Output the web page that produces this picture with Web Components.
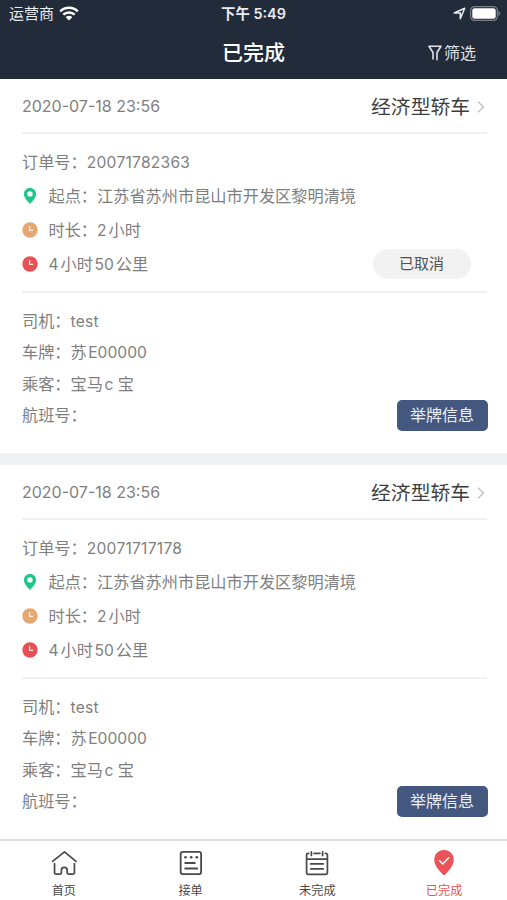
<!DOCTYPE html>
<html lang="zh-CN">
<head>
<meta charset="UTF-8">
<meta name="viewport" content="width=device-width, initial-scale=1.0">
<title>已完成</title>
<style>
    body {
        margin: 0;
        height: 900px;
        overflow: hidden;
        background: #fff;
        font-family: Inter, "Noto Sans CJK SC", sans-serif;
        font-size: 16.2px;
        color: #7f7f7f;
        display: flex;
        flex-direction: column;
    }
    order-list {
        flex: 1;
        min-height: 0;
    }
</style>
</head>
<body>
    <status-bar carrier="运营商" time="下午 5:49"></status-bar>
    <nav-header>已完成<span slot="action">筛选</span></nav-header>
    <order-list>
        <order-card date="2020-07-18 23:56" car="经济型轿车">
            <info-row slot="trip">订单号：<num-text wide>20071782363</num-text></info-row>
            <info-row slot="trip" icon="pin">起点：江苏省苏州市昆山市开发区黎明清境</info-row>
            <info-row slot="trip" icon="clock" color="#e5a873">时长：<num-text gap="end">2</num-text>小时</info-row>
            <info-row slot="trip" icon="clock" color="#e85057"><num-text gap="end">4</num-text>小时<num-text gap="both">50</num-text>公里<pill-tag slot="end">已取消</pill-tag></info-row>
            <info-row slot="people">司机：<num-text wide>test</num-text></info-row>
            <info-row slot="people">车牌：苏<num-text gap="start">E00000</num-text></info-row>
            <info-row slot="people">乘客：宝马<num-text gap="start">c </num-text>宝</info-row>
            <info-row slot="people">航班号：<action-button slot="end">举牌信息</action-button></info-row>
        </order-card>
        <order-card date="2020-07-18 23:56" car="经济型轿车">
            <info-row slot="trip">订单号：<num-text wide>20071717178</num-text></info-row>
            <info-row slot="trip" icon="pin">起点：江苏省苏州市昆山市开发区黎明清境</info-row>
            <info-row slot="trip" icon="clock" color="#e5a873">时长：<num-text gap="end">2</num-text>小时</info-row>
            <info-row slot="trip" icon="clock" color="#e85057"><num-text gap="end">4</num-text>小时<num-text gap="both">50</num-text>公里</info-row>
            <info-row slot="people">司机：<num-text wide>test</num-text></info-row>
            <info-row slot="people">车牌：苏<num-text gap="start">E00000</num-text></info-row>
            <info-row slot="people">乘客：宝马<num-text gap="start">c </num-text>宝</info-row>
            <info-row slot="people">航班号：<action-button slot="end">举牌信息</action-button></info-row>
        </order-card>
    </order-list>
    <tab-bar>
        <tab-item icon="home">首页</tab-item>
        <tab-item icon="list">接单</tab-item>
        <tab-item icon="calendar">未完成</tab-item>
        <tab-item icon="done" active>已完成</tab-item>
    </tab-bar>

<script>
const TAB_ICONS = {
    home: `<g fill="none" stroke="currentColor" stroke-width="1.8" stroke-linecap="round" stroke-linejoin="round">
        <path d="M2.200 11.800 14.500 2l12 9.800"/>
        <path d="M4.200 14.200V23.500a1.500 1.500 0 0 0 1.500 1.500H9.800a1.500 1.500 0 0 0 1.500-1.500V21a3 3 0 0 1 6 0v2.500a1.500 1.500 0 0 0 1.500 1.500H23.300a1.500 1.500 0 0 0 1.500-1.500V14.200"/>
    </g>`,
    list: `<g fill="none" stroke="currentColor" stroke-width="1.9" stroke-linecap="round">
        <rect x="3.300" y="2" width="21.200" height="23" rx="2.300"/>
        <path d="M8 13.500h10M8 19.200h12.500"/>
    </g>
    <g fill="currentColor"><circle cx="8.300" cy="7.500" r="1.400"/><circle cx="14.200" cy="7.500" r="1.400"/><circle cx="20" cy="7.500" r="1.400"/></g>`,
    calendar: `<g fill="none" stroke="currentColor" stroke-width="1.8" stroke-linecap="round">
        <path d="M5.300 3.500H5a1.800 1.800 0 0 0-1.800 1.800V23A2.200 2.200 0 0 0 5.400 25.200H22.600A2.200 2.200 0 0 0 24.800 23V5.300A1.800 1.800 0 0 0 23 3.500H22.700M11 3.500h6M3.200 9.500H24.800"/>
        <path d="M8.200 2v3.600M19.800 2v3.600M7.500 14.500h13M7.500 19.500h13"/>
    </g>`,
    done: `<path fill="currentColor" d="M14 0C8.200 0 3.900 4.400 3.900 10 3.900 16 9 21.500 12.800 25.300a1.700 1.700 0 0 0 2.400 0C19 21.500 24.100 16 24.100 10 24.100 4.400 19.800 0 14 0z"/>
    <path d="M9.400 11.200l3.300 3.200 6.200-6.400" fill="none" stroke="#fff" stroke-width="1.500" stroke-linecap="round" stroke-linejoin="round"/>`
};

class StatusBar extends HTMLElement {
    constructor() {
        super();
        this.attachShadow({ mode: "open" });
    }

    connectedCallback() {
        this.shadowRoot.innerHTML = `
            <style>
                :host {
                    display: grid;
                    grid-template-columns: 1fr auto 1fr;
                    align-items: center;
                    height: 27px;
                    flex: none;
                    padding: 0 6px 0 9px;
                    background: #222b3a;
                    color: #e9ecf1;
                    font-size: 15px;
                    line-height: 27px;
                }
                .left, .right { display: flex; align-items: center; }
                .left { gap: 5px; }
                .right { justify-content: flex-end; gap: 4px; }
                .time { font-size: 14.4px; font-weight: 600; margin-right: 3px; }
                svg { display: block; }
            </style>
            <div class="left">
                <span>${this.getAttribute("carrier")}</span>
                <svg width="20" height="15" viewBox="0 0 20 15">
                    <g fill="none" stroke="#fff" stroke-width="2.5">
                        <path d="M1.200 5.400a12.600 12.600 0 0 1 17.600 0"/>
                        <path d="M4.300 8.700a8.200 8.200 0 0 1 11.400 0"/>
                    </g>
                    <path fill="#fff" d="M10 14.500 6.700 11.200a4.700 4.700 0 0 1 6.600 0z"/>
                </svg>
            </div>
            <div class="time">${this.getAttribute("time")}</div>
            <div class="right">
                <svg width="13" height="13" viewBox="0 0 13 13">
                    <path d="M1.200 6 11.700 1.300 7.300 11.700V6z" fill="none" stroke="#e9ecf1" stroke-width="1.500" stroke-linejoin="round"/>
                </svg>
                <svg width="31" height="15" viewBox="0 0 31 15">
                    <rect x=".6" y=".6" width="26.800" height="13.800" rx="4" fill="none" stroke="#7b818a" stroke-width="1.200"/>
                    <rect x="2.300" y="2.300" width="23.400" height="10.400" rx="2.300" fill="#fff"/>
                    <path d="M28.500 5a2.700 2.700 0 0 1 0 5z" fill="#7b818a"/>
                </svg>
            </div>
        `;
    }
}

class NavHeader extends HTMLElement {
    constructor() {
        super();
        this.attachShadow({ mode: "open" });
        this.shadowRoot.innerHTML = `
            <style>
                :host {
                    display: grid;
                    grid-template-columns: 1fr auto 1fr;
                    align-items: center;
                    height: 52px;
                    flex: none;
                    padding: 0 31px;
                    box-sizing: border-box;
                    background: #222b3a;
                    color: #fff;
                    line-height: 50px;
                }
                .title {
                    grid-column: 2;
                    font-size: 21px;
                    font-weight: 500;
                }
                .action {
                    display: flex;
                    align-items: center;
                    justify-content: flex-end;
                    gap: 2px;
                    color: #dfe2e8;
                    font-size: 16px;
                }
            </style>
            <div class="title"><slot></slot></div>
            <div class="action">
                <svg width="14" height="16" viewBox="0 0 14 16" fill="none" stroke="currentColor" stroke-width="1.600" stroke-linejoin="round" stroke-linecap="round">
                    <path d="M5 14V7.500L1 1.300H13L9 7.500V14.800"/>
                </svg>
                <slot name="action"></slot>
            </div>
        `;
    }
}

class OrderList extends HTMLElement {
    constructor() {
        super();
        this.attachShadow({ mode: "open" });
        this.shadowRoot.innerHTML = `
            <style>
                :host {
                    display: flex;
                    flex-direction: column;
                    gap: 12px;
                    overflow: hidden;
                    background: #f0f1f4;
                }
            </style>
            <slot></slot>
        `;
    }
}

class OrderCard extends HTMLElement {
    constructor() {
        super();
        this.attachShadow({ mode: "open" });
    }

    connectedCallback() {
        this.shadowRoot.innerHTML = `
            <style>
                :host {
                    display: block;
                    flex: none;
                    height: 374px;
                    padding: 0 20px 0 22px;
                    box-sizing: border-box;
                    background: #fff;
                }
                header {
                    display: flex;
                    align-items: center;
                    height: 51px;
                    line-height: 51px;
                    padding-top: 2px;
                    border-bottom: 2px solid #f0f0f0;
                }
                .date { flex: 1; --num-size: 16px; }
                .car { font-size: 19.8px; color: #3d3d3d; margin-right: 7px; padding-top: 2px; }
                header svg { margin-right: 2px; }
                .trip {
                    --row: 34px;
                    height: 136px;
                    padding: 11px 0 10px;
                    border-bottom: 2px solid #f0f0f0;
                }
                .people {
                    --row: 31.400px;
                    padding-top: 13px;
                }
            </style>
            <header>
                <span class="date"><num-text>${this.getAttribute("date")}</num-text></span>
                <span class="car">${this.getAttribute("car")}</span>
                <svg width="8" height="12" viewBox="0 0 8 12" fill="none" stroke="#c4c4c4" stroke-width="1.500">
                    <path d="M1 .8 6.500 6 1 11.200"/>
                </svg>
            </header>
            <div class="trip"><slot name="trip"></slot></div>
            <div class="people"><slot name="people"></slot></div>
        `;
    }
}

class InfoRow extends HTMLElement {
    constructor() {
        super();
        this.attachShadow({ mode: "open" });
    }

    connectedCallback() {
        const icon = this.getAttribute("icon");
        const color = this.getAttribute("color");
        let svg = "";
        if (icon === "pin") {
            svg = `<svg width="16" height="16" viewBox="0 0 16 16">
                <path fill="#1cc786" fill-rule="evenodd" d="M8 0C4.600 0 2 2.600 2 5.900 2 10 5.600 13 8 16c2.400-3 6-6 6-10.100C14 2.600 11.400 0 8 0zm0 3.200a2.700 2.700 0 1 1 0 5.400 2.700 2.700 0 0 1 0-5.400z"/>
            </svg>`;
        } else if (icon === "clock") {
            svg = `<svg width="16" height="16" viewBox="0 0 16 16">
                <circle cx="8" cy="8" r="7.700" fill="${color}"/>
                <path d="M7.600 4.200V8.300H11.200" fill="none" stroke="#fff" stroke-opacity=".85" stroke-width="1.300"/>
            </svg>`;
        }

        this.shadowRoot.innerHTML = `
            <style>
                :host {
                    display: flex;
                    align-items: center;
                    height: var(--row);
                    line-height: var(--row);
                    white-space: nowrap;
                }
                svg { flex: none; margin: 0 10.500px 1px 0; }
                .text { flex: 1; }
            </style>
            ${svg}
            <div class="text"><slot></slot></div>
            <slot name="end"></slot>
        `;
    }
}

// latin runs next to hanzi get a small gap
class NumText extends HTMLElement {
    constructor() {
        super();
        this.attachShadow({ mode: "open" });
        this.shadowRoot.innerHTML = `<style>
                :host { display: inline; font-size: var(--num-size, 15.600px); }
                :host([wide]) { letter-spacing: .25px; }
                :host([gap="end"]), :host([gap="both"]) { margin-right: 2px; }
                :host([gap="start"]), :host([gap="both"]) { margin-left: 1.500px; }
            </style><slot></slot>`;
    }
}

class PillTag extends HTMLElement {
    constructor() {
        super();
        this.attachShadow({ mode: "open" });
        this.shadowRoot.innerHTML = `
            <style>
                :host {
                    display: block;
                    width: 98px;
                    height: 30px;
                    line-height: 29px;
                    margin: 0 16.500px 1px 0;
                    border-radius: 15px;
                    background: #f2f2f2;
                    color: #505050;
                    font-size: 15px;
                    text-align: center;
                }
            </style>
            <slot></slot>
        `;
    }
}

class ActionButton extends HTMLElement {
    constructor() {
        super();
        this.attachShadow({ mode: "open" });
        this.shadowRoot.innerHTML = `
            <style>
                :host {
                    display: block;
                    width: 91px;
                    height: 31px;
                    line-height: 31px;
                    margin: 0 -.500px 1px 0;
                    border-radius: 5px;
                    background: #43577f;
                    color: #eef1f6;
                    font-size: 16px;
                    text-align: center;
                }
            </style>
            <slot></slot>
        `;
    }
}

class TabBar extends HTMLElement {
    constructor() {
        super();
        this.attachShadow({ mode: "open" });
        this.shadowRoot.innerHTML = `
            <style>
                :host {
                    display: flex;
                    flex: none;
                    height: 61px;
                    box-sizing: border-box;
                    border-top: 2px solid #e2e2e2;
                    background: #fff;
                }
            </style>
            <slot></slot>
        `;
    }
}

class TabItem extends HTMLElement {
    constructor() {
        super();
        this.attachShadow({ mode: "open" });
    }

    connectedCallback() {
        this.shadowRoot.innerHTML = `
            <style>
                :host {
                    flex: 1;
                    display: flex;
                    flex-direction: column;
                    align-items: center;
                    padding: 9px 0 0 1px;
                    color: #4a4a4a;
                    font-size: 12.200px;
                    line-height: 18px;
                }
                :host([active]) { color: #ea5358; }
                svg { display: block; margin-bottom: 5px; }
            </style>
            <svg width="28" height="28" viewBox="0 0 28 28">${TAB_ICONS[this.getAttribute("icon")]}</svg>
            <span><slot></slot></span>
        `;
    }
}

customElements.define('num-text', NumText);
customElements.define('status-bar', StatusBar);
customElements.define('nav-header', NavHeader);
customElements.define('order-list', OrderList);
customElements.define('order-card', OrderCard);
customElements.define('info-row', InfoRow);
customElements.define('pill-tag', PillTag);
customElements.define('action-button', ActionButton);
customElements.define('tab-bar', TabBar);
customElements.define('tab-item', TabItem);
</script>
</body>
</html>
